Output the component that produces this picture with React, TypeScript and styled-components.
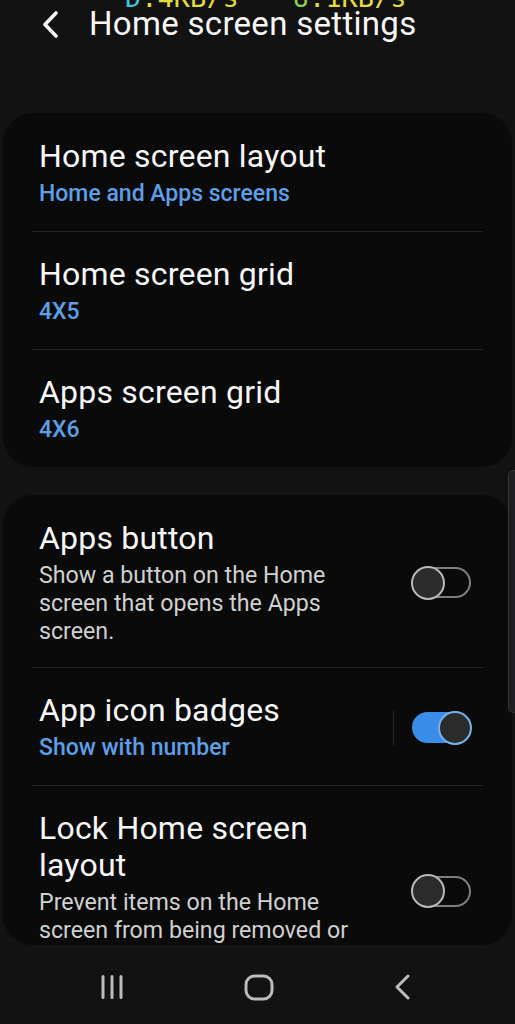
import React from 'react';
import styled, { createGlobalStyle } from 'styled-components';

const GlobalStyle = createGlobalStyle`
  html, body {
    margin: 0;
    padding: 0;
    background: #121212;
  }
  * {
    box-sizing: border-box;
  }
`;

const Screen = styled.div`
  position: relative;
  width: 515px;
  height: 1024px;
  display: flex;
  flex-direction: column;
  overflow: hidden;
  background: #121212;
  font-family: Roboto, 'Noto Sans', sans-serif;
  color: #f4f4f4;
`;

// Полосата на статуса е отрязана - виждат се само долните части на буквите
const StatusStrip = styled.div`
  height: 8px;
  display: flex;
  align-items: flex-end;
  gap: 54px;
  padding-left: 125px;
  overflow: hidden;
  font-family: 'DejaVu Sans Mono', 'Liberation Mono', monospace;
  font-size: 27px;
`;

const Speed = styled.div`
  flex-shrink: 0;
  line-height: 20px;
  height: 20px;
  color: #e2dc3e;
`;

const SpeedKey = styled.span<{ $color: string }>`
  color: ${(p) => p.$color};
`;

const Header = styled.div`
  height: 32px;
  display: flex;
  align-items: center;
  gap: 29px;
  padding-left: 40px;
`;

const HeaderTitle = styled.h1`
  margin: 0;
  font-size: 33px;
  line-height: 32px;
  font-weight: 400;
  letter-spacing: 0.3px;
  color: #f6f6f6;
`;

const Content = styled.div`
  display: flex;
  flex-direction: column;
  gap: 28px;
  padding: 73px 3px 0;
`;

const Card = styled.div<{ $height?: number }>`
  background: #0a0a0a;
  border-radius: 30px;
  overflow: hidden;
  height: ${(p) => (p.$height ? `${p.$height}px` : 'auto')};
`;

const Row = styled.div<{ $divider?: boolean }>`
  display: flex;
  align-items: center;
  padding: 25px 41px 22px 36px;
  position: relative;

  &::before {
    content: '';
    display: ${(p) => (p.$divider ? 'block' : 'none')};
    position: absolute;
    top: 0;
    left: 29px;
    right: 29px;
    height: 1px;
    background: #232323;
  }
`;

const RowText = styled.div`
  flex: 1;
  min-width: 0;
  display: flex;
  flex-direction: column;
`;

const RowTitle = styled.div`
  font-size: 32px;
  line-height: 37px;
  font-weight: 400;
  letter-spacing: 0.2px;
  color: #f6f6f6;
`;

const RowValue = styled.div`
  margin-top: 4px;
  font-size: 23px;
  line-height: 30px;
  font-weight: 500;
  color: #5d9fe6;
`;

const RowDescription = styled.div`
  margin-top: 4px;
  font-size: 23.2px;
  line-height: 28px;
  color: #d0d0d0;
`;

const SwitchSlot = styled.div<{ $separator?: boolean }>`
  width: 78px;
  height: 36px;
  flex-shrink: 0;
  display: flex;
  align-items: center;
  justify-content: flex-end;
  border-left: 1px solid ${(p) => (p.$separator ? '#262626' : 'transparent')};
`;

const Track = styled.div<{ $on: boolean }>`
  width: 59px;
  height: 31px;
  display: flex;
  align-items: center;
  justify-content: ${(p) => (p.$on ? 'flex-end' : 'flex-start')};
  border-radius: 16px;
  border: 2px solid ${(p) => (p.$on ? '#3a8ee8' : '#7e7e7e')};
  background: ${(p) => (p.$on ? '#3a8ee8' : 'transparent')};
`;

const Knob = styled.div<{ $on: boolean }>`
  width: 34px;
  height: 34px;
  margin: 0 -3px;
  flex-shrink: 0;
  border-radius: 50%;
  border: 2.5px solid ${(p) => (p.$on ? '#74b2f2' : '#b9b9b9')};
  background: #2b2b2b;
`;

const ScrollThumb = styled.div`
  position: absolute;
  top: 470px;
  right: -4px;
  width: 11px;
  height: 243px;
  border-radius: 6px;
  background: #1d1d22;
  border: 1px solid #35353b;
`;

const NavBar = styled.div`
  flex: 1;
  display: flex;
  align-items: center;
  justify-content: space-between;
  padding: 5px 104px 0 100px;
`;

const NavIcon = styled.svg`
  display: block;
  color: #bcbcbc;
`;

const Toggle: React.FC<{ on: boolean }> = ({ on }) => (
  <Track $on={on}>
    <Knob $on={on} />
  </Track>
);

const BackIcon = () => (
  <svg width="20" height="28" viewBox="0 0 20 28" style={{ display: 'block' }}>
    <path
      d="M16 3 L5 14.5 L16 26"
      fill="none"
      stroke="#f6f6f6"
      strokeWidth="3.6"
      strokeLinecap="round"
      strokeLinejoin="round"
    />
  </svg>
);

const App: React.FC = () => {
  return (
    <>
      <GlobalStyle />
      <Screen>
        <StatusStrip>
          <Speed>
            <SpeedKey $color="#3ac6da">D</SpeedKey>:4KB/s
          </Speed>
          <Speed>
            <SpeedKey $color="#8bd04a">U</SpeedKey>:1KB/s
          </Speed>
        </StatusStrip>

        <Header>
          <BackIcon />
          <HeaderTitle>Home screen settings</HeaderTitle>
        </Header>

        <Content>
          <Card>
            <Row>
              <RowText>
                <RowTitle>Home screen layout</RowTitle>
                <RowValue>Home and Apps screens</RowValue>
              </RowText>
            </Row>
            <Row $divider>
              <RowText>
                <RowTitle>Home screen grid</RowTitle>
                <RowValue>4X5</RowValue>
              </RowText>
            </Row>
            <Row $divider>
              <RowText>
                <RowTitle>Apps screen grid</RowTitle>
                <RowValue>4X6</RowValue>
              </RowText>
            </Row>
          </Card>

          <Card $height={450}>
            <Row>
              <RowText>
                <RowTitle>Apps button</RowTitle>
                <RowDescription>
                  Show a button on the Home screen that opens the Apps screen.
                </RowDescription>
              </RowText>
              <SwitchSlot>
                <Toggle on={false} />
              </SwitchSlot>
            </Row>
            <Row $divider>
              <RowText>
                <RowTitle>App icon badges</RowTitle>
                <RowValue>Show with number</RowValue>
              </RowText>
              <SwitchSlot $separator>
                <Toggle on />
              </SwitchSlot>
            </Row>
            <Row $divider>
              <RowText>
                <RowTitle>Lock Home screen layout</RowTitle>
                <RowDescription>
                  Prevent items on the Home screen from being removed or repositioned.
                </RowDescription>
              </RowText>
              <SwitchSlot>
                <Toggle on={false} />
              </SwitchSlot>
            </Row>
          </Card>
        </Content>

        <NavBar>
          <NavIcon width="24" height="24" viewBox="0 0 24 24">
            <path d="M3 1.5 V22.5 M12 1.5 V22.5 M21 1.5 V22.5" stroke="currentColor" strokeWidth="3" strokeLinecap="round" />
          </NavIcon>
          <NavIcon width="30" height="27" viewBox="0 0 30 27">
            <rect x="2" y="2" width="26" height="23" rx="8.5" fill="none" stroke="currentColor" strokeWidth="3" />
          </NavIcon>
          <NavIcon width="18" height="26" viewBox="0 0 18 26">
            <path d="M15 2 L4 13 L15 24" fill="none" stroke="currentColor" strokeWidth="3" strokeLinecap="round" strokeLinejoin="round" />
          </NavIcon>
        </NavBar>

        <ScrollThumb />
      </Screen>
    </>
  );
};

export default App;
